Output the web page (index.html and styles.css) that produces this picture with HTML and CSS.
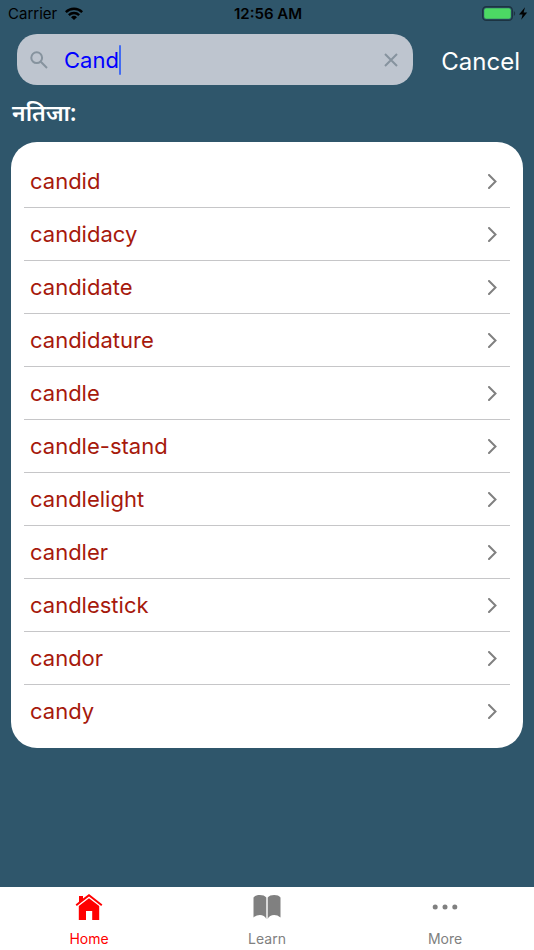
FILE: index.html
```
<!DOCTYPE html>
<html lang="en">
<head>
  <meta charset="UTF-8" />
  <meta name="viewport" content="width=device-width, initial-scale=1.0"/>
  <title>Dictionary</title>
  <link rel="stylesheet" href="styles.css">
</head>
<body>

  <div class="status-bar">
    <div class="status-left">
      <span>Carrier</span>
      <svg width="18" height="13" viewBox="0 0 18 13">
        <path d="M0 4.2 A13 13 0 0 1 18 4.2 L16.3 5.9 A10.6 10.6 0 0 0 1.7 5.9 Z"/>
        <path d="M3 7.2 A8.7 8.7 0 0 1 15 7.2 L13.3 8.9 A6.3 6.3 0 0 0 4.7 8.9 Z"/>
        <path d="M6 10.2 A4.4 4.4 0 0 1 12 10.2 L9 13 Z"/>
      </svg>
    </div>
    <div class="status-time">12:56 AM</div>
    <div class="status-right">
      <svg width="46" height="15" viewBox="0 0 46 15">
        <rect x="0.7" y="0.7" width="29.6" height="13.6" rx="3.6" fill="none" stroke="#1c3341" stroke-width="1.4"/>
        <rect x="2.2" y="2.2" width="26.6" height="10.6" rx="2" fill="#4cd964"/>
        <path d="M31.8 5 C33.6 5.8 33.6 9.2 31.8 10 Z" fill="#1c3341"/>
        <path d="M43 1.2 L37 8.6 H40.6 L39.2 13.8 L45.2 6.4 H41.6 Z"/>
      </svg>
    </div>
  </div>

  <div class="search-row">
    <div class="search-box">
      <svg class="search-icon" width="18" height="18" viewBox="0 0 18 18">
        <circle cx="6.7" cy="6.7" r="5.4"/>
        <path d="M10.8 10.8 L17 17"/>
      </svg>
      <input type="text" class="search-input" id="search" value="Cand" aria-label="Search" />
      <span class="caret"></span>
      <button class="clear" id="clear" aria-label="Clear">
        <svg width="14" height="14" viewBox="0 0 14 14"><path d="M1 1 L13 13 M13 1 L1 13"/></svg>
      </button>
    </div>
    <button class="cancel">Cancel</button>
  </div>

  <h1 class="results-title" lang="ne">नतिजा:</h1>

  <ul class="results">
    <li><a href="#candid">candid <svg class="chevron" viewBox="0 0 9 15"><path d="M1 1 L7.5 7.5 L1 14"/></svg></a></li>
    <li><a href="#candidacy">candidacy <svg class="chevron" viewBox="0 0 9 15"><path d="M1 1 L7.5 7.5 L1 14"/></svg></a></li>
    <li><a href="#candidate">candidate <svg class="chevron" viewBox="0 0 9 15"><path d="M1 1 L7.5 7.5 L1 14"/></svg></a></li>
    <li><a href="#candidature">candidature <svg class="chevron" viewBox="0 0 9 15"><path d="M1 1 L7.5 7.5 L1 14"/></svg></a></li>
    <li><a href="#candle">candle <svg class="chevron" viewBox="0 0 9 15"><path d="M1 1 L7.5 7.5 L1 14"/></svg></a></li>
    <li><a href="#candle-stand">candle-stand <svg class="chevron" viewBox="0 0 9 15"><path d="M1 1 L7.5 7.5 L1 14"/></svg></a></li>
    <li><a href="#candlelight">candlelight <svg class="chevron" viewBox="0 0 9 15"><path d="M1 1 L7.5 7.5 L1 14"/></svg></a></li>
    <li><a href="#candler">candler <svg class="chevron" viewBox="0 0 9 15"><path d="M1 1 L7.5 7.5 L1 14"/></svg></a></li>
    <li><a href="#candlestick">candlestick <svg class="chevron" viewBox="0 0 9 15"><path d="M1 1 L7.5 7.5 L1 14"/></svg></a></li>
    <li><a href="#candor">candor <svg class="chevron" viewBox="0 0 9 15"><path d="M1 1 L7.5 7.5 L1 14"/></svg></a></li>
    <li><a href="#candy">candy <svg class="chevron" viewBox="0 0 9 15"><path d="M1 1 L7.5 7.5 L1 14"/></svg></a></li>
  </ul>

  <nav class="tabs">
    <a class="tab active" href="#home">
      <svg width="28" height="28" viewBox="0 0 28 28">
        <path d="M14 1 L27.4 11.4 L26.2 12.9 L14 3.6 L1.8 12.9 L0.6 11.4 L4 8.8 V3 H8 V5.6 Z"/>
        <path d="M14 5.2 L24.2 13 V27 H17.2 V18 H11 V27 H3.8 V13 Z"/>
      </svg>
      <span>Home</span>
    </a>
    <a class="tab" href="#learn">
      <svg width="28" height="28" viewBox="0 0 28 28">
        <path d="M0.5 4.5 C2.5 1.2 11 1.2 13.3 4.5 V26 C11.5 21.5 5 20.5 0.5 24.5 Z"/>
        <path d="M27.5 4.5 C25.5 1.2 17 1.2 14.7 4.5 V26 C16.5 21.5 23 20.5 27.5 24.5 Z"/>
      </svg>
      <span>Learn</span>
    </a>
    <a class="tab" href="#more">
      <svg width="28" height="28" viewBox="0 0 28 28">
        <circle cx="4.2" cy="14" r="2.5"/>
        <circle cx="14" cy="14" r="2.5"/>
        <circle cx="23.8" cy="14" r="2.5"/>
      </svg>
      <span>More</span>
    </a>
  </nav>

  <script>
    const search = document.getElementById('search');

    document.getElementById('clear').onclick = function () {
      search.value = '';
      search.focus();
    };
  </script>

</body>
</html>
```
FILE: styles.css
```
* {
  box-sizing: border-box;
}

body {
  margin: 0;
  min-height: 100vh;
  display: flex;
  flex-direction: column;
  background-color: #2f566b;
  font-family: Inter, "Noto Sans", sans-serif;
}

button {
  padding: 0;
  border: none;
  background: none;
  font-family: inherit;
  cursor: pointer;
}

svg {
  display: block;
}

.status-bar {
  display: grid;
  grid-template-columns: 1fr auto 1fr;
  align-items: center;
  height: 27px;
  padding: 0 6px 0 8px;
  font-size: 15px;
  color: #000;
}

.status-left {
  display: flex;
  align-items: center;
  gap: 8px;
}

.status-time {
  font-weight: 600;
}

.status-right {
  display: flex;
  justify-content: flex-end;
}

.search-row {
  display: flex;
  align-items: center;
  gap: 28px;
  padding: 7px 14px 0 17px;
}

.search-box {
  flex: 1;
  min-width: 0;
  display: flex;
  align-items: center;
  height: 51px;
  padding: 0 15px 0 13px;
  border-radius: 20px;
  background-color: #bec5cf;
}

.search-icon {
  margin-right: 16px;
  fill: none;
  stroke: #86939e;
  stroke-width: 2;
}

.search-input {
  field-sizing: content;
  min-width: 1px;
  padding: 0;
  border: none;
  outline: none;
  background: none;
  font-family: inherit;
  font-size: 22px;
  color: #00f;
  caret-color: transparent;
}

.caret {
  width: 2px;
  height: 30px;
  border-radius: 1px;
  background-color: #426bf2;
}

.clear {
  margin-left: auto;
}

.clear svg {
  fill: none;
  stroke: #86939e;
  stroke-width: 2;
}

.cancel {
  padding-top: 4px;
  font-size: 24px;
  color: #fff;
}

.results-title {
  margin: 11px 12px 14px;
  font-family: "Noto Sans", sans-serif;
  font-size: 23px;
  line-height: 32px;
  font-weight: 600;
  color: #fff;
}

.results {
  margin: 0 11px 24px;
  padding: 13px 13px 10px;
  border-radius: 26px;
  background-color: #fff;
  list-style: none;
}

.results a {
  display: flex;
  align-items: center;
  justify-content: space-between;
  height: 53px;
  padding: 0 13px 0 6px;
  border-bottom: 1px solid #c6c6c8;
  font-size: 22px;
  color: #a6190c;
  text-decoration: none;
}

.results li:last-child a {
  border-color: transparent;
}

.chevron {
  width: 9px;
  height: 15px;
  fill: none;
  stroke: #808080;
  stroke-width: 2;
  stroke-linecap: round;
}

.tabs {
  display: flex;
  margin-top: auto;
  background-color: #fff;
}

.tab {
  flex: 1;
  display: flex;
  flex-direction: column;
  align-items: center;
  gap: 9px;
  padding: 6px 0 2px;
  font-size: 14px;
  line-height: 18px;
  color: #808080;
  fill: #808080;
  text-decoration: none;
}

.tab.active {
  color: #f00;
  fill: #f00;
}
```
